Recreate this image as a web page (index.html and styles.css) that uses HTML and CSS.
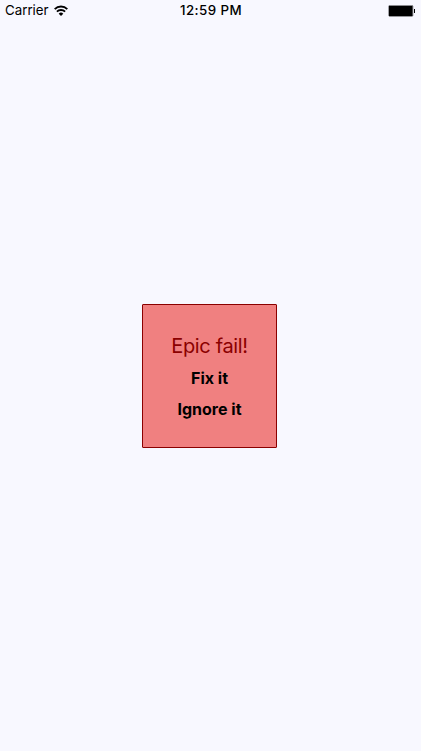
FILE: index.html
```html
<!DOCTYPE html>
<html lang="en">
<head>
<meta charset="utf-8">
<title>Error</title>
<link rel="stylesheet" href="styles.css">
</head>
<body>
<header class="status">
  <div class="carrier"><span class="carrier-name">Carrier</span>
    <svg class="wifi" width="14" height="11" viewBox="0 0 14 11"><g fill="none" stroke="#000" stroke-width="1.9"><path d="M.7 4.1a9 9 0 0 1 12.6 0"/><path d="M2.9 6.7a5.8 5.8 0 0 1 8.2 0"/></g><path d="M4.7 8.7a3.3 3.3 0 0 1 4.6 0L7 11z"/></svg>
  </div>
  <time class="clock">12:59 PM</time>
  <svg class="battery" width="28" height="12" viewBox="0 0 28 12"><rect x=".8" y=".4" width="24" height="10.9" rx=".8" fill="none" stroke="#000" stroke-width=".5"/><rect x="1" y="1" width="23.5" height="10"/><rect x="26" y="4" width="1" height="4"/></svg>
</header>
<main class="screen">
  <section class="card">
    <p class="message">Epic fail!</p>
    <button class="action">Fix it</button>
    <button class="action">Ignore it</button>
  </section>
</main>
</body>
</html>
```
FILE: styles.css
```css
* { box-sizing: border-box; }
body {
  margin: 0;
  height: 751px;
  display: flex;
  flex-direction: column;
  background: #f8f8ff;
  color: #000;
  font-family: Inter, sans-serif;
}
.status {
  height: 21px;
  display: grid;
  grid-template-columns: 1fr auto 1fr;
  align-items: center;
  padding: 0 5px;
  font-size: 13.3px;
  line-height: 15px;
}
.carrier { display: flex; align-items: center; gap: 5px; }
.carrier-name { letter-spacing: 0; }
.carrier-name, .clock { padding-bottom: 1px; }
.clock { font-weight: 500; letter-spacing: .45px; padding-left: 1px; }
.battery { justify-self: end; }
.screen {
  flex: 1;
  display: flex;
  flex-direction: column;
  align-items: center;
  padding-top: 283px;
}
.card {
  width: 135px;
  height: 144px;
  margin-right: 2px;
  padding: 28px 0;
  display: flex;
  flex-direction: column;
  align-items: center;
  background: #f08080;
  border: 1px solid #8b0000;
  border-radius: 1px;
}
.message {
  margin: 0;
  font-size: 20px;
  letter-spacing: -.35px;
  line-height: 27px;
  color: #8b0000;
  white-space: nowrap;
}
.action {
  padding: 0;
  border: 0;
  background: none;
  color: #000;
  font: 700 16px/30px Inter, sans-serif;
  white-space: nowrap;
}
.message + .action { margin: 3px 0 1px; }
```
